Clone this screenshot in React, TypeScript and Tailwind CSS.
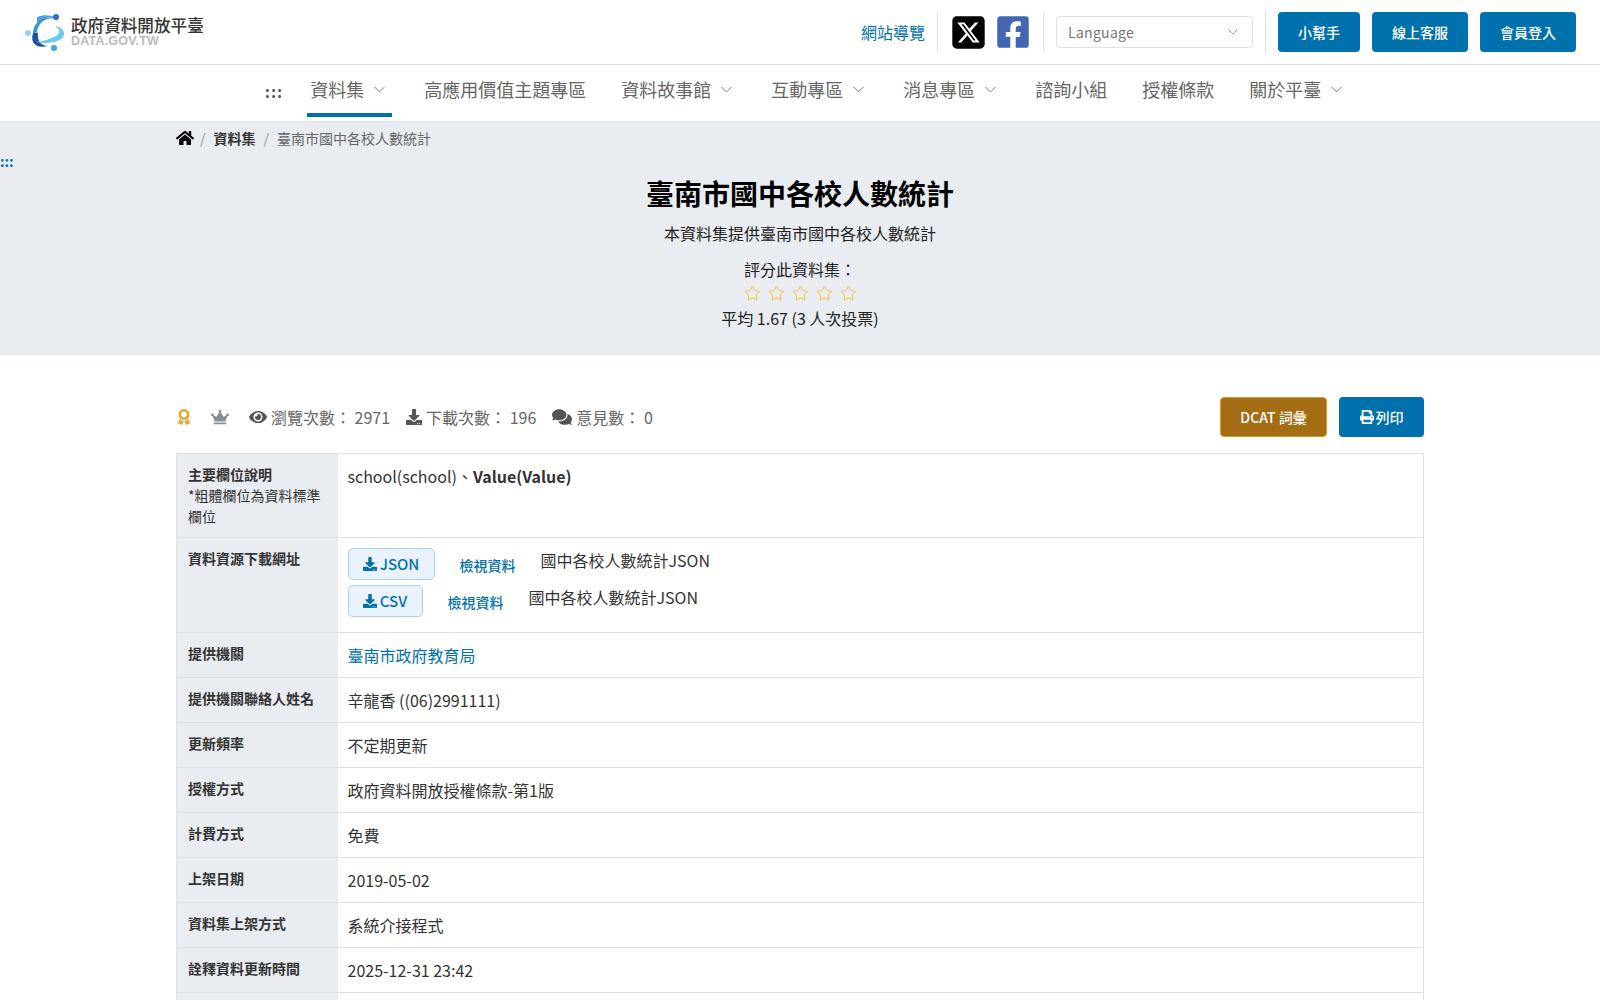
import React from "react";
import { ChevronDown, Star } from "lucide-react";
import { FaHome, FaEye, FaDownload, FaComments, FaPrint, FaCrown, FaAward, FaFacebookSquare } from "react-icons/fa";
import { FaSquareXTwitter } from "react-icons/fa6";

function Logo() {
  return (
    <svg width="44" height="42" viewBox="0 0 44 42" className="shrink-0">
      <path d="M9 24 C 8 12, 20 3, 30 8 C 22 6, 14 12, 13 21 Z" fill="#3b93d6" />
      <path d="M13 6 C 24 2, 33 6, 34 10 C 28 5, 20 5, 13 12 Z" fill="#4aa3e0" />
      <path d="M9 22 C 6 32, 12 38, 24 35 C 17 35, 13 30, 14 22 Z" fill="#1d4fa0" />
      <path d="M12 31 C 26 34, 41 30, 40 22 C 39 17, 34 15, 31 15 C 36 18, 37 22, 32 25 C 27 28, 20 30, 12 31 Z" fill="#6ccbec" />
      <circle cx="32" cy="6" r="3" fill="#2f6fc0" />
      <circle cx="4" cy="22" r="3" fill="#8ed4ef" />
      <circle cx="30" cy="37" r="3" fill="#3fa6df" />
    </svg>
  );
}

function NavItem({ label, chevron, active }: { label: string; chevron?: boolean; active?: boolean }) {
  return (
    <div className={`h-[52px] flex items-center gap-[6px] px-[3px] border-b-4 ${active ? "border-[#0071ad]" : "border-transparent"}`}>
      <span className="text-[18px] leading-none text-[#666]">{label}</span>
      {chevron && <ChevronDown size={19} strokeWidth={1} className="text-[#555]" />}
    </div>
  );
}

function Row({ th, children }: { th: React.ReactNode; children: React.ReactNode }) {
  return (
    <tr className="border-b border-[#dfe2e8] align-top">
      <th className="w-[161px] bg-[#e9ecf1] pl-[11px] pr-2 pt-[10px] text-left text-[14px] leading-[21px] font-bold text-[#333]">{th}</th>
      <td className="px-[10px] pt-[10px] pb-[9px] text-[16px] leading-[25px] text-[#333]">{children}</td>
    </tr>
  );
}

function Resource({ fmt, w, gap }: { fmt: string; w: string; gap: string }) {
  return (
    <div className="flex items-start">
      <div className={`h-[32px] ${w} flex items-center justify-center gap-[3px] rounded-[5px] border border-[#a6d2f2] bg-[#eaf3fd] text-[15px] font-medium text-[#0071ad]`}>
        <FaDownload size={14} />
        <span>{fmt}</span>
      </div>
      <span className="ml-[25px] mt-[5px] text-[14px] font-medium leading-[24px] text-[#0071ad]">檢視資料</span>
      <span className={`${gap} text-[16px] leading-[25px] text-[#333]`}>國中各校人數統計JSON</span>
    </div>
  );
}

const rows: [string, string][] = [
  ["提供機關聯絡人姓名", "辛龍香 ((06)2991111)"],
  ["更新頻率", "不定期更新"],
  ["授權方式", "政府資料開放授權條款-第1版"],
  ["計費方式", "免費"],
  ["上架日期", "2019-05-02"],
  ["資料集上架方式", "系統介接程式"],
  ["詮釋資料更新時間", "2025-12-31 23:42"],
];

export default function App() {
  return (
    <div className="h-[1000px] overflow-hidden bg-white font-['Noto_Sans_CJK_TC','Noto_Sans',sans-serif] text-[#333]">
      <header className="h-[65px] flex items-center border-b border-[#dfe2e8] pl-[24px] pr-[24px]">
        <Logo />
        <div className="ml-[3px] flex flex-col mt-[-1px]">
          <span className="text-[16.6px] leading-[20px] font-medium text-[#333]">政府資料開放平臺</span>
          <span className="font-['Liberation_Sans',sans-serif] text-[12.5px] leading-[13px] font-bold tracking-[0.2px] text-[#bbb]">DATA.GOV.TW</span>
        </div>
        <div className="ml-auto flex items-center">
          <span className="text-[16px] text-[#0071ad]">網站導覽</span>
          <div className="mx-[12px] h-[40px] w-px bg-[#dfe2e8]" />
          <FaSquareXTwitter size={37} className="text-black" />
          <FaFacebookSquare size={36} className="ml-[8px] text-[#4267b2]" />
          <div className="mx-[12px] h-[40px] w-px bg-[#dfe2e8]" />
          <div className="w-[197px] h-[32px] flex items-center justify-between rounded-[4px] border border-[#dfe2e8] pl-[11px] pr-[11px]">
            <span className="text-[14px] tracking-[0.3px] text-[#777]">Language</span>
            <ChevronDown size={16} strokeWidth={1} className="text-[#777]" />
          </div>
          <div className="mx-[12px] h-[40px] w-px bg-[#dfe2e8]" />
          <div className="flex gap-[12px]">
            <button className="w-[82px] h-[40px] rounded-[4px] bg-[#0071ad] text-[14px] font-medium text-white">小幫手</button>
            <button className="w-[96px] h-[40px] rounded-[4px] bg-[#0071ad] text-[14px] font-medium text-white">線上客服</button>
            <button className="w-[96px] h-[40px] rounded-[4px] bg-[#0071ad] text-[14px] font-medium text-white">會員登入</button>
          </div>
        </div>
      </header>

      <nav className="h-[57px] flex items-start justify-center border-b border-[#dfe2e8] pl-[14px]">
        <div className="h-[52px] flex items-center mr-[24px] text-[#555] text-[16px] font-bold tracking-[1px]">:::</div>
        <div className="flex items-start gap-[29px]">
          <NavItem label="資料集" chevron active />
          <NavItem label="高應用價值主題專區" />
          <NavItem label="資料故事館" chevron />
          <NavItem label="互動專區" chevron />
          <NavItem label="消息專區" chevron />
          <NavItem label="諮詢小組" />
          <NavItem label="授權條款" />
          <NavItem label="關於平臺" chevron />
        </div>
      </nav>

      <section className="relative h-[233px] bg-[#e9ecf1]">
        <div className="mx-auto w-[1248px] flex items-center h-[32px] text-[14px]">
          <FaHome size={18} className="text-black" />
          <span className="mx-[6px] text-[#999]">/</span>
          <span className="ml-[2px] font-bold text-[#333]">資料集</span>
          <span className="mx-[8px] text-[#999]">/</span>
          <span className="text-[#666]">臺南市國中各校人數統計</span>
        </div>
        <div className="absolute left-0 top-[29px] text-[14px] leading-[20px] font-bold text-[#0071ad]">:::</div>
        <div className="flex flex-col items-center">
          <h1 className="mt-[18px] text-[28px] leading-[42px] font-bold text-black">臺南市國中各校人數統計</h1>
          <p className="mt-[7px] text-[16px] leading-[24px] text-[#222]">本資料集提供臺南市國中各校人數統計</p>
          <p className="mt-[12px] text-[16px] leading-[24px] text-[#222]">評分此資料集：</p>
          <div className="flex gap-[7px] h-[24px] items-center">
            {[0, 1, 2, 3, 4].map((i) => (
              <Star key={i} size={17} strokeWidth={1.4} className="text-[#f8bb3a]" />
            ))}
          </div>
          <p className="mt-[1px] text-[16px] leading-[24px] text-[#222]">平均 1.67 (3 人次投票)</p>
        </div>
      </section>

      <main className="mx-auto w-[1248px]">
        <div className="mt-[42px] h-[40px] flex items-center text-[16px] text-[#666]">
          <FaAward size={16} className="text-[#eda32f]" />
          <FaCrown size={18} className="ml-[19px] text-[#888c96]" />
          <FaEye size={18} className="ml-[20px] text-[#555]" />
          <span className="ml-[4px]">瀏覽次數： 2971</span>
          <FaDownload size={16} className="ml-[16px] text-[#555]" />
          <span className="ml-[4px]">下載次數： 196</span>
          <FaComments size={20} className="ml-[16px] text-[#555]" />
          <span className="ml-[4px]">意見數： 0</span>
          <div className="ml-auto flex gap-[12px]">
            <button className="w-[107px] h-[40px] rounded-[4px] border border-[#e09a2b] bg-[#a56d13] text-[14px] font-medium text-white">DCAT 詞彙</button>
            <button className="w-[85px] h-[40px] flex items-center justify-center gap-[2px] rounded-[4px] bg-[#0071ad] text-[14px] font-medium text-white">
              <FaPrint size={14} />
              列印
            </button>
          </div>
        </div>

        <table className="mt-[16px] w-full table-fixed border-collapse border border-[#dfe2e8]">
          <tbody>
            <tr className="h-[84px] border-b border-[#dfe2e8] align-top">
              <th className="w-[161px] bg-[#e9ecf1] pl-[11px] pr-2 pt-[10px] text-left text-[14px] leading-[21px] font-bold text-[#333]">
                主要欄位說明
                <div className="font-normal">*粗體欄位為資料標準欄位</div>
              </th>
              <td className="px-[10px] pt-[10px] text-[16px] leading-[25px] text-[#333]">
                school(school)、<b className="font-bold">Value(Value)</b>
              </td>
            </tr>
            <tr className="h-[95px] border-b border-[#dfe2e8] align-top">
              <th className="bg-[#e9ecf1] pl-[11px] pr-2 pt-[10px] text-left text-[14px] leading-[21px] font-bold text-[#333]">資料資源下載網址</th>
              <td className="px-[10px] pt-[10px]">
                <div className="flex flex-col gap-[5px]">
                  <Resource fmt="JSON" w="w-[87px]" gap="ml-[25px]" />
                  <Resource fmt="CSV" w="w-[75px]" gap="ml-[25px]" />
                </div>
              </td>
            </tr>
            <Row th="提供機關">
              <span className="text-[#0071ad]">臺南市政府教育局</span>
            </Row>
            {rows.map(([th, td]) => (
              <Row key={th} th={th}>
                {td}
              </Row>
            ))}
            <Row th="">{""}</Row>
          </tbody>
        </table>
      </main>
    </div>
  );
}
